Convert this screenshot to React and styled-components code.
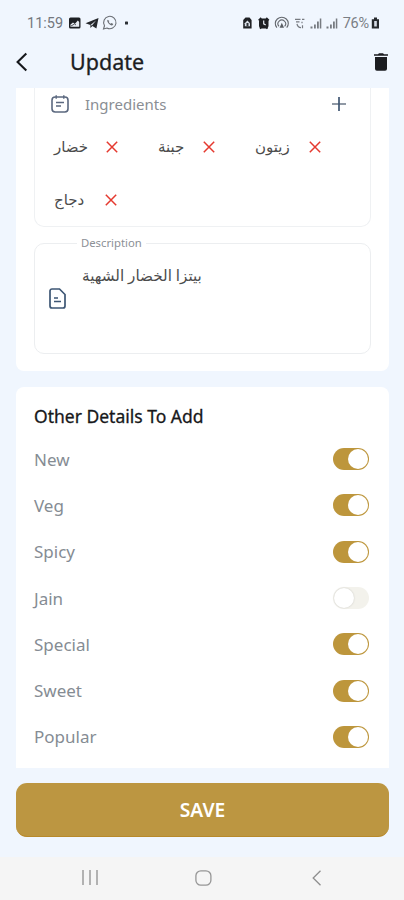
import { useState } from 'react';
import styled, { createGlobalStyle } from 'styled-components';

const INGREDIENTS = [
  { name: 'خضار', width: 35 },
  { name: 'جبنة', width: 28 },
  { name: 'زيتون', width: 37 },
  { name: 'دجاج', width: 34 },
];

const OPTIONS = [
  { name: 'New', on: true },
  { name: 'Veg', on: true },
  { name: 'Spicy', on: true },
  { name: 'Jain', on: false },
  { name: 'Special', on: true },
  { name: 'Sweet', on: true },
  { name: 'Popular', on: true },
];

export default function App() {
  const [options, setOptions] = useState(OPTIONS);
  const [ingredients, setIngredients] = useState(INGREDIENTS);

  const toggle = name => {
    setOptions(options.map(o => (o.name === name ? { ...o, on: !o.on } : o)));
  };

  const remove = name => {
    setIngredients(ingredients.filter(i => i.name !== name));
  };

  return (
    <Screen>
      <GlobalStyle />
      <StatusBar>
        <Clock>11:59</Clock>
        <LeftIcons />
        <RightIcons />
        <Battery>76%</Battery>
        <BatteryIcon />
      </StatusBar>
      <AppBar>
        <IconButton aria-label='back'>
          <svg width='12' height='20' viewBox='0 0 12 20' fill='none' stroke='#16181c' strokeWidth='2.1'>
            <path d='M10.3 1.500 1.600 10l8.700 8.500' />
          </svg>
        </IconButton>
        <PageTitle>Update</PageTitle>
        <IconButton aria-label='delete'>
          <svg width='14' height='18' viewBox='0 0 14 18' fill='#1b1c20'>
            <path d='M0 1.2h4L5 .3h4l1 .9h4v1.5H0zM1 4h12v11.8a1.9 1.9 0 0 1-1.9 1.9H2.9A1.9 1.9 0 0 1 1 15.8z' />
          </svg>
        </IconButton>
      </AppBar>

      <Content>
        <FormCard>
          <IngredientBox>
            <IngredientHeader>
              <svg width='18' height='18' viewBox='0 0 18 18' fill='none' stroke='#5b687f' strokeWidth='1.6'>
                <rect x='1' y='2' width='16' height='15' rx='3.2' />
                <path d='M5.2 .3v3.4M12.8 .3v3.4M5 7.5h8M5 11h5' strokeWidth='1.4' />
              </svg>
              <HeaderLabel>Ingredients</HeaderLabel>
              <IconButton aria-label='add'>
                <svg width='14' height='14' viewBox='0 0 14 14' fill='none' strokeWidth='1.7'>
                  <path d='M0 7h14' stroke='#7d8795' />
                  <path d='M7 0v14' stroke='#3f5672' />
                </svg>
              </IconButton>
            </IngredientHeader>
            <Chips>
              {ingredients.map(i => (
                <Chip key={i.name}>
                  <ChipText $width={i.width}>{i.name}</ChipText>
                  <IconButton onClick={() => remove(i.name)}>
                    <svg width='12' height='12' viewBox='0 0 12 12' stroke='#e5392f' strokeWidth='1.5'>
                      <path d='M.8.8l10.4 10.4M11.2.8.8 11.2' />
                    </svg>
                  </IconButton>
                </Chip>
              ))}
            </Chips>
          </IngredientBox>

          <DescriptionBox>
            <Legend>Description</Legend>
            <svg width='17' height='21' viewBox='0 0 17 21' fill='none' stroke='#3d5674' strokeWidth='1.7'>
              <path d='M3 1h7.5L16 6.5V18a2 2 0 0 1-2 2H3a2 2 0 0 1-2-2V3a2 2 0 0 1 2-2z' />
              <path d='M5 10h4M5 13.5h7' strokeWidth='1.5' />
            </svg>
            <DescriptionText>بيتزا الخضار الشهية</DescriptionText>
          </DescriptionBox>
        </FormCard>

        <OptionsCard>
          <SectionTitle>Other Details To Add</SectionTitle>
          {options.map(o => (
            <OptionRow key={o.name}>
              <OptionName>{o.name}</OptionName>
              <Switch $on={o.on} role='switch' aria-checked={o.on} aria-label={o.name} onClick={() => toggle(o.name)}>
                <Thumb $on={o.on} />
              </Switch>
            </OptionRow>
          ))}
        </OptionsCard>
      </Content>

      <SaveButton>SAVE</SaveButton>

      <NavBar>
        <svg width='16' height='15' viewBox='0 0 16 15' stroke='#9c9c9c' strokeWidth='1.5'>
          <path d='M1 0v15M8 0v15M15 0v15' />
        </svg>
        <HomeIcon width='17' height='16' viewBox='0 0 17 16'>
          <rect x='.9' y='.8' width='15' height='14.4' rx='5' />
        </HomeIcon>
        <svg width='10' height='16' viewBox='0 0 10 16' fill='none' stroke='#8e8e8e' strokeWidth='1.3'>
          <path d='M8.5.8 1.2 8l7.3 7.2' />
        </svg>
      </NavBar>
    </Screen>
  );
}

// picture, telegram, whatsapp and the "more" dot
function LeftIcons() {
  return (
    <StatusSvg width='64' height='16' viewBox='0 0 64 16' $left={5}>
      <rect x='1' y='2.5' width='11.5' height='11' rx='1.5' fill='#1d2024' />
      <path d='M2.500 11.800V9.500L5 7.500l1.800 1.500 3-3.500 1.400 1.500v4.800z' fill='#e9eef5' />
      <path d='M3 11 6.500 9l1.500 1' fill='none' stroke='#55595f' />
      <path d='M17.500 8.300 30.500 3 28.400 13.500l-4-2.400-2 2v-3.200z' fill='#24272b' />
      <path d='M22.400 10 28 5.500 24 10.500' fill='#dfe5ee' />
      <path d='M35.500 14l1-3.300a6.200 6.200 0 1 1 2.400 2.300z' fill='none' stroke='#6a6e74' strokeWidth='1.1' />
      <path d='M39.500 4.800c-1.200 2 2.600 6.200 5 5.500l.8-1.400-1.800-1-.9.8c-1-.4-1.500-1-1.900-1.900l.7-.8z' fill='#6a6e74' />
      <rect x='57' y='6.500' width='3' height='3' rx='.6' fill='#2c3035' />
    </StatusSvg>
  );
}

// lock, alarm, hotspot, call over wifi and two signal meters
function RightIcons() {
  return (
    <StatusSvg width='96' height='16' viewBox='0 0 96 16' $auto>
      <path d='M1.200 5 3.500 2.500h4L9.600 5v8.500H1.200z' fill='#202226' />
      <path d='M2.800 8.300 5.400 5.500l2.600 2.800v3H2.800z' fill='#dbe1ea' />
      <path d='M4.500 8h2v3.300h-2z' fill='#33363b' />
      <rect x='17' y='3.500' width='9.500' height='10' rx='3' fill='#1d1f23' />
      <path d='M16.700 5.300l2.600-2.300M26.800 5.300 24.200 3M18 13.700l1.500-1.500M25.500 13.700 24 12.200' stroke='#1d1f23' strokeWidth='1.7' />
      <path d='M21.700 5.500v3.300l2 1.200' fill='none' stroke='#e6ebf3' strokeWidth='1.200' />
      <g fill='none' stroke='#64686e' strokeWidth='1.100'>
        <path d='M34.900 12.700a6.500 6.300 0 1 1 9.800 0' />
        <path d='M37 11.300a3.800 3.700 0 1 1 5.600 0' />
      </g>
      <path d='M39.800 7.700l2.200 5h-4.400z' fill='#5a5e64' />
      <g stroke='#777b81' strokeWidth='1.200' fill='none'>
        <path d='M53 4.400h5.500M60 4.400h2.400M54 6.800h3.500M60 6.800v1.500' />
        <path d='M55 8.800c.3 2 1.600 3.600 4 3.800M60.500 10.300v3' />
      </g>
      <path d='M68.500 11.500h2v2h-2zM72 9.500h1.800v4H72zM75 6.500h1.800v7H75zM77.800 3.500h1.500v10h-1.500z' fill='#777b81' />
      <path d='M84.500 11.500h2v2h-2zM88 9.500h1.800v4H88zM91 6.500h1.800v7H91zM93.800 3.500h1.500v10h-1.500z' fill='#777b81' />
    </StatusSvg>
  );
}

function BatteryIcon() {
  return (
    <StatusSvg width='9' height='16' viewBox='0 0 9 16' $left={2}>
      <path d='M3 2.500h3v1.700h2V13.500H.8V4.200H3z' fill='#26292d' />
      <path d='M3.200 6h2.600v5.500H3.200z' fill='#d7dde6' />
    </StatusSvg>
  );
}

const GlobalStyle = createGlobalStyle`
  * {
    box-sizing: border-box;
  }

  body {
    margin: 0;
    font-family: 'Noto Sans', 'Open Sans', 'DejaVu Sans', sans-serif;
  }

  svg {
    display: block;
    flex: none;
  }
`;

const Screen = styled.div`
  display: flex;
  flex-direction: column;
  height: 900px;
  overflow: hidden;
  background-color: #f0f6fe;
`;

const StatusBar = styled.div`
  display: flex;
  align-items: center;
  height: 46px;
  padding: 0 24px 0 27px;
`;

const Clock = styled.span`
  width: 36px;
  font-family: Roboto, sans-serif;
  font-size: 14.5px;
  color: #74787e;
`;

const StatusSvg = styled.svg`
  margin-left: ${props => (props.$auto ? 'auto' : `${props.$left}px`)};
`;

const Battery = styled.span`
  margin-left: 5px;
  font-family: Roboto, sans-serif;
  font-size: 14.5px;
  letter-spacing: -0.2px;
  color: #7a7e85;
`;

const AppBar = styled.header`
  display: flex;
  align-items: center;
  height: 42px;
  padding: 0 16px;
  padding-bottom: 11px;
`;

const IconButton = styled.button`
  display: flex;
  padding: 0;
  border: none;
  background: none;
  cursor: pointer;
`;

const PageTitle = styled.h1`
  flex: 1;
  margin: 0 0 0 42px;
  font-size: 21.5px;
  font-weight: 400;
  line-height: 28px;
  color: #1c1e22;
  -webkit-text-stroke: 0.3px #1c1e22;
`;

const Content = styled.main`
  display: flex;
  flex-direction: column;
  gap: 16px;
  height: 680px;
  padding: 0 15px 0 16px;
  overflow: hidden;
`;

const FormCard = styled.section`
  display: flex;
  flex-direction: column;
  gap: 16px;
  flex: none;
  height: 283px;
  padding: 0 18px;
  border-radius: 0 0 8px 8px;
  background-color: #fff;
`;

const IngredientBox = styled.div`
  height: 139px;
  border: 1px solid #eff1f3;
  border-top: none;
  border-radius: 0 0 10px 10px;
`;

const IngredientHeader = styled.div`
  display: flex;
  align-items: center;
  height: 32px;
  padding: 0 24px 0 16px;
`;

const HeaderLabel = styled.span`
  flex: 1;
  margin-left: 16px;
  font-size: 15px;
  color: #8a8e94;
`;

const Chips = styled.div`
  display: flex;
  flex-wrap: wrap;
  column-gap: 40px;
  padding-left: 19px;
`;

const Chip = styled.div`
  display: flex;
  align-items: center;
  gap: 17px;
  height: 53px;
`;

const ChipText = styled.span`
  width: ${props => props.$width}px;
  padding-bottom: 2px;
  font-size: 15px;
  line-height: 20px;
  white-space: nowrap;
  color: #4c4c4c;
`;

const DescriptionBox = styled.div`
  position: relative;
  display: flex;
  align-items: center;
  height: 111px;
  padding-left: 14px;
  border: 1px solid #eceef0;
  border-radius: 10px;
`;

const Legend = styled.span`
  position: absolute;
  top: -10px;
  left: 42px;
  padding: 0 4px;
  font-size: 11.3px;
  line-height: 18px;
  color: #8c9096;
  background-color: #fff;
`;

const DescriptionText = styled.p`
  align-self: flex-start;
  margin: 20px 0 0 16px;
  font-size: 15.2px;
  line-height: 22px;
  color: #4c4c4c;
`;

const OptionsCard = styled.section`
  flex: none;
  height: 381px;
  padding: 18px 20px 0 18px;
  border-radius: 8px 8px 0 0;
  background-color: #fff;
`;

const SectionTitle = styled.h2`
  margin: 0 0 8px;
  font-size: 17.5px;
  font-weight: 400;
  line-height: 23px;
  color: #17181a;
  -webkit-text-stroke: 0.3px #17181a;
`;

const OptionRow = styled.div`
  display: flex;
  align-items: center;
  justify-content: space-between;
  height: 46.3px;
`;

const OptionName = styled.span`
  font-size: 17px;
  color: #858c93;
`;

const Switch = styled.button`
  display: flex;
  justify-content: ${props => (props.$on ? 'flex-end' : 'flex-start')};
  width: 36px;
  height: 22px;
  padding: 1px;
  border: none;
  border-radius: 11px;
  background-color: ${props => (props.$on ? '#bd963c' : '#f3f2ec')};
  cursor: pointer;
`;

const Thumb = styled.span`
  width: 20px;
  height: 20px;
  border-radius: 50%;
  background-color: #fff;
  box-shadow: ${props => (props.$on ? 'none' : '0 0 2px rgba(0, 0, 0, 0.18)')};
`;

const SaveButton = styled.button`
  flex: none;
  height: 54px;
  margin: 15px 15px 0 16px;
  border: none;
  border-bottom: 1px solid #b8892a;
  border-radius: 11px;
  font-family: inherit;
  font-size: 19.2px;
  font-weight: 600;
  color: #fff;
  background-color: #bc9641;
  cursor: pointer;
`;

const NavBar = styled.nav`
  display: flex;
  justify-content: space-between;
  align-items: center;
  height: 43px;
  margin-top: auto;
  padding: 0 82px 2px;
  background-color: #f5f5f5;
`;

const HomeIcon = styled.svg`
  margin-right: 4px;
  fill: none;
  stroke: #969696;
  stroke-width: 1.3;
`;
